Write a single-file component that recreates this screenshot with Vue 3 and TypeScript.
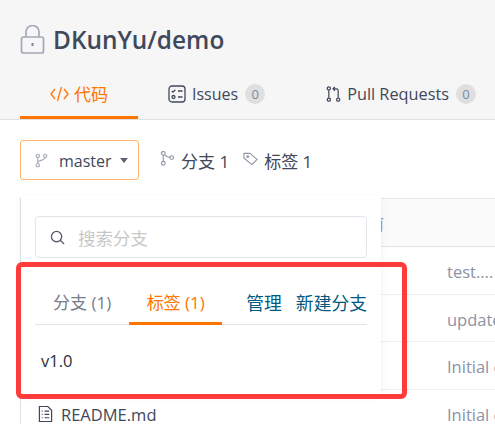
<template>
  <div class="page">
    <header class="head">
      <h1 class="title">
        <svg class="lock" viewBox="0 0 24 29" fill="none" stroke="#a4a9b8" stroke-width="1.7">
          <rect x="1" y="12" width="22" height="16" rx="2" />
          <path d="M5.500 12V7a6.500 6.500 0 0 1 13 0v5" />
          <path d="M12 18v3" stroke-width="2" stroke="#7f8592" />
        </svg>
        DKunYu/demo
      </h1>
      <nav class="tabs">
        <a class="tab active">
          <svg class="code-ico" viewBox="0 0 19 16" fill="none" stroke="#ff7500" stroke-width="1.3">
            <path d="M5 3L1 8l4 5M14 3l4 5-4 5M11.500 1L7.500 15" />
          </svg>
          代码
        </a>
        <a class="tab">
          <svg class="ico" viewBox="0 0 18 18" fill="none" stroke="#40485b" stroke-width="1.3">
            <rect x="1" y="1" width="16" height="16" rx="3" />
            <path d="M3.800 6l1.200 1.200L7.400 4.800M10 6h4.500M10 12h4.500" />
            <circle cx="5.500" cy="12" r="1.500" />
          </svg>
          Issues
          <span class="badge">0</span>
        </a>
        <a class="tab pulls">
          <svg class="ico pr" viewBox="0 0 16 18" fill="none" stroke="#40485b" stroke-width="1.3">
            <circle cx="3" cy="3" r="1.700" />
            <circle cx="3" cy="15" r="1.700" />
            <circle cx="13" cy="15" r="1.700" />
            <path d="M3 5v8M13 13V5.500A2 2 0 0 0 11 3.500H8M9.500 1.500L7.500 3.500l2 2" />
          </svg>
          Pull Requests
          <span class="badge">0</span>
        </a>
      </nav>
    </header>

    <section class="body">
      <div class="toolbar">
        <button class="branch-btn">
          <svg class="branch-ico" viewBox="0 0 14 16" fill="none" stroke="#a4a9b6" stroke-width="1.200">
            <circle cx="3" cy="3" r="1.800" />
            <circle cx="3" cy="13" r="1.800" />
            <circle cx="11" cy="3" r="1.800" />
            <path d="M3 4.800v6.400M11 4.800c0 3-8 3-8 5" />
          </svg>
          <span>master</span>
          <i class="caret"></i>
        </button>
        <span class="stat">
          <svg class="stat-ico" viewBox="0 0 16 16" fill="none" stroke="#8f95a3" stroke-width="1.200">
            <circle cx="3.500" cy="2.500" r="2" />
            <circle cx="3.500" cy="13" r="2" />
            <circle cx="12.500" cy="7" r="2" />
            <path d="M3.500 4.500V11M5 4c1.500 2 3 2.500 5.500 3" />
          </svg>
          分支 1
        </span>
        <span class="stat">
          <svg class="stat-ico" viewBox="0 0 16 16" fill="none" stroke="#8f95a3" stroke-width="1.200">
            <path d="M1 2.500h6.500L15 9l-5.500 5.500L1 7.500z" stroke-linejoin="round" />
            <circle cx="5" cy="6" r=".8" />
          </svg>
          标签 1
        </span>
      </div>

      <div class="table-wrap">
        <div class="table">
          <div class="row thead"><span></span><span class="msg">前</span></div>
          <div v-for="r in rows" :key="r.id" class="row">
            <span class="file">
              <svg v-if="r.file" class="file-ico" viewBox="0 0 16 18" fill="none" stroke="#40485b" stroke-width="1.300">
                <path d="M1.500 1h9l4 4v12h-13zM4 6h1M7 6h5M4 9.500h1M7 9.500h5M4 13h1M7 13h5" />
              </svg>
              {{ r.file }}
            </span>
            <span class="msg">{{ r.msg }}</span>
          </div>
        </div>

        <div class="popover">
          <label class="search">
            <svg class="search-ico" viewBox="0 0 16 16" fill="none" stroke="#555b68" stroke-width="1.400">
              <circle cx="7" cy="7" r="5.500" />
              <path d="M11 11l4 4" />
            </svg>
            <span class="placeholder">搜索分支</span>
          </label>
          <div class="pop-tabs">
            <a class="pop-tab">分支 (1)</a>
            <a class="pop-tab on">标签 (1)</a>
            <a class="pop-link first">管理</a>
            <a class="pop-link">新建分支</a>
          </div>
          <div class="tag-item">v1.0</div>
        </div>

        <div class="highlight"></div>
      </div>
    </section>
  </div>
</template>

<script setup lang="ts">
const rows = [
  { id: 1, file: '', msg: 'test....' },
  { id: 2, file: '', msg: 'update' },
  { id: 3, file: '', msg: 'Initial commit' },
  { id: 4, file: 'README.md', msg: 'Initial commit' },
]
</script>

<style>
html, body { margin: 0; background: #fff; overflow: hidden; }
</style>

<style scoped>
.page {
  width: 495px;
  height: 424px;
  overflow: hidden;
  font-family: "Open Sans", "Noto Sans CJK SC", sans-serif;
  color: #40485b;
}
.head {
  box-sizing: border-box;
  height: 120px;
  padding: 24px 0 0 20px;
  background: #f6f6f6;
  border-bottom: 1px solid #e1e1e1;
}
.title {
  display: flex;
  align-items: center;
  gap: 8px;
  height: 30px;
  margin: 0;
  font-size: 24.400px;
  font-weight: 600;
  color: #40485b;
}
.lock { width: 25px; height: 29px; }
.tabs { display: flex; margin-top: 25px; height: 40px; }
.tab {
  display: flex;
  align-items: center;
  height: 40px;
  box-sizing: border-box;
  padding: 0 0 11px;
  font-size: 16px;
  white-space: nowrap;
}
.tab.active {
  width: 118px;
  padding: 0 0 8px 30px;
  color: #ff7500;
  border-bottom: 3px solid #ff7500;
  gap: 5px;
  font-size: 17px;
}
.tab:nth-child(2) { margin-left: 30px; gap: 6px; }
.pulls { margin-left: 61px; gap: 6px; font-size: 16.300px; }
.code-ico { width: 19px; height: 16px; }
.ico { width: 18px; height: 18px; }
.pr { width: 15px; }
.badge {
  width: 20px;
  height: 20px;
  margin-left: 1px;
  border-radius: 50%;
  background: #dfdfdf;
  color: #7a8aa8;
  font-size: 13px;
  line-height: 20px;
  text-align: center;
}
.body { padding: 20px 0 0 20px; }
.toolbar { display: flex; align-items: center; height: 40px; }
.branch-btn {
  display: flex;
  align-items: center;
  box-sizing: border-box;
  width: 119px;
  height: 40px;
  padding: 1px 0 0 14px;
  background: #fff;
  border: 1px solid #ffb46e;
  border-radius: 3px;
  font: inherit;
  font-size: 16px;
  color: #40485b;
}
.branch-ico { width: 13px; height: 15px; margin-right: 11px; }
.caret {
  margin-left: 8px;
  border: 4.500px solid transparent;
  border-top: 5px solid #5d6371;
  border-bottom: 0;
}
.stat { display: flex; align-items: center; gap: 6px; margin-left: 21px; font-size: 17px; }
.stat + .stat { margin-left: 14px; }
.stat-ico { width: 15px; height: 15px; margin-top: -4px; }
.table-wrap { position: relative; margin-top: 18px; }
.table { width: 600px; border: 1px solid #e3e7ef; border-width: 1px 0 0 1px; border-left-color: #dde2ea; }
.row {
  display: grid;
  grid-template-columns: 426px 1fr;
  height: 47.500px;
  box-sizing: border-box;
  align-items: center;
  padding-top: 3px;
  border-bottom: 1px solid #eceef2;
  font-size: 16.500px;
}
.thead { height: 48px; padding-top: 0; background: #fafafa; border-bottom-color: #dfe3ea; }
.thead .msg { margin-left: -80px; font-size: 17px; }
.msg { color: #8c92a4; white-space: nowrap; }
.file { display: flex; align-items: center; gap: 8px; padding-left: 17px; }
.file-ico { width: 15px; height: 18px; }
.popover {
  position: absolute;
  left: 1px;
  top: -2px;
  box-sizing: border-box;
  width: 360px;
  height: 199px;
  padding: 20px 14px 0;
  background: #fff;
  box-shadow: 0 2px 6px rgba(60, 70, 90, .08);
}
.search {
  display: flex;
  align-items: center;
  gap: 13px;
  box-sizing: border-box;
  height: 42px;
  padding: 0 0 0 14px;
  border: 1px solid #e2e4ec;
  border-radius: 4px;
}
.search-ico { width: 15px; height: 15px; }
.placeholder { font-size: 17.500px; color: #c8c8c8; }
.pop-tabs {
  display: flex;
  align-items: flex-start;
  height: 50px;
  margin-top: 17px;
  border-bottom: 1px solid #e2e4ec;
  font-size: 17px;
  box-sizing: border-box;
}
.pop-tab { box-sizing: border-box; height: 50px; padding-top: 5px; line-height: 46px; text-align: center; }
.pop-tab:nth-child(1) { width: 95px; color: #777d8a; }
.on { width: 94px; color: #ff7500; border-bottom: 3px solid #ff7500; }
.pop-link { color: #005980; white-space: nowrap; margin-left: 14px; padding-top: 5px; font-size: 17.800px; line-height: 46px; }
.first { margin-left: 24px; }
.tag-item { padding: 24px 6px; font-size: 16.500px; color: #2b2f3a; }
.highlight {
  position: absolute;
  left: -4px;
  top: 64px;
  width: 391px;
  height: 137px;
  box-sizing: border-box;
  border: 5px solid #ff3b3b;
  border-radius: 6px;
}
</style>
